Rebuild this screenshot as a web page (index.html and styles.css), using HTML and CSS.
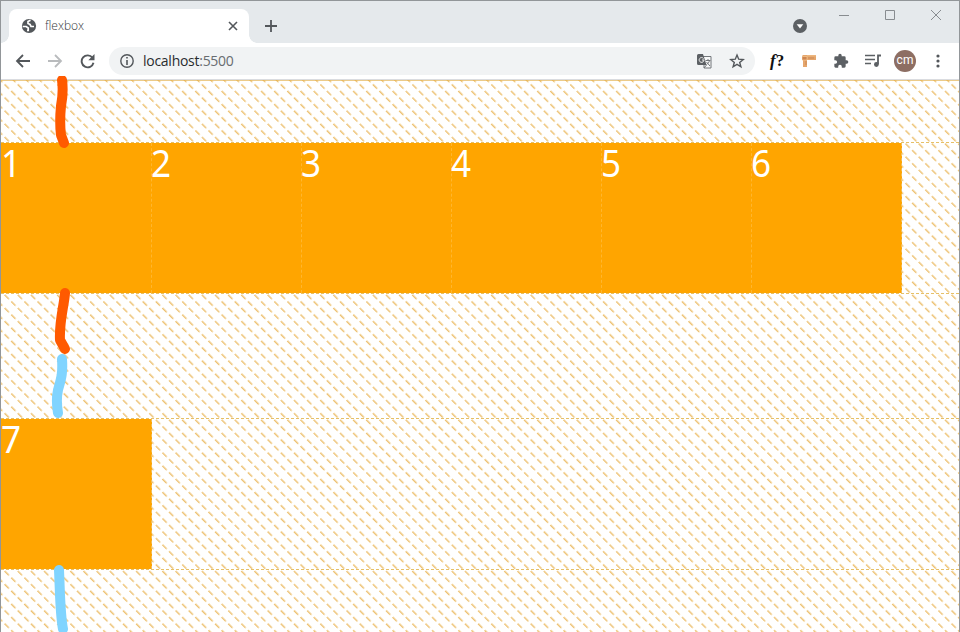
FILE: index.html
```
<!DOCTYPE html>
<html lang="en">
<head>
<meta charset="utf-8">
<title>flexbox</title>
<link rel="stylesheet" href="styles.css">
</head>
<body>
<div class="browser">
  <header class="tabs">
    <div class="tab">
      <svg class="globe" width="16" height="16" viewBox="0 0 16 16"><circle cx="8" cy="8" r="7.1" fill="#53575b"/><path d="M1.700 8.500h3.500l2 1.500v2.500H6M9.500 2.200L7 3.500v2l2 1 1 2h3" fill="none" stroke="#fff" stroke-width="1.7"/></svg>
      <span class="title">flexbox</span>
      <svg width="10" height="10" viewBox="0 0 10 10"><path d="M1 1l8 8M9 1L1 9" stroke="#53575b" stroke-width="1.6"/></svg>
    </div>
    <svg class="plus" width="14" height="14" viewBox="0 0 14 14"><path d="M7 1v12M1 7h12" stroke="#53575b" stroke-width="1.8"/></svg>
    <svg class="guest" width="14" height="14" viewBox="0 0 14 14"><circle cx="7" cy="7" r="7" fill="#5c6064"/><path d="M3.700 5.200h6.600L7 9.500z" fill="#fff"/></svg>
    <svg class="controls" width="104" height="12" viewBox="0 0 104 12"><path d="M1 6.500h10M47.500 1.500h9v9h-9zM93 1l10 10M103 1L93 11" fill="none" stroke="#888c90"/></svg>
  </header>
  <nav class="toolbar">
    <svg class="nav" width="82" height="16" viewBox="0 0 82 16"><path d="M15 8H2M8 2L2 8l6 6" fill="none" stroke="#53575b" stroke-width="1.8"/><path d="M33 8h13M40 2l6 6-6 6" fill="none" stroke="#b9bbbd" stroke-width="1.8"/><path d="M77.500 4.800A6 6 0 1 0 78.500 9.800" fill="none" stroke="#53575b" stroke-width="1.9"/><path d="M79.500 1v6.200h-6.200z" fill="#53575b"/></svg>
    <div class="address">
      <svg width="14" height="14" viewBox="0 0 14 14"><circle cx="7" cy="7" r="6.200" fill="none" stroke="#53575b" stroke-width="1.4"/><path d="M7 3v1.600M7 6v5" stroke="#53575b" stroke-width="1.600"/></svg>
      <span class="url">localhost<span class="port">:5500</span></span>
      <svg class="translate" width="15" height="15" viewBox="0 0 15 15"><path d="M5 2.500h9v11.500H7" fill="#f7f8f8" stroke="#73777b"/><path d="M0 1.500A1.500 1.500 0 0 1 1.500 0H6l3.500 11H1.500A1.500 1.500 0 0 1 0 9.500z" fill="#5c6064"/><path d="M6.500 4.500A2.400 2.400 0 1 0 7 6H5" fill="none" stroke="#eee"/><path d="M8.500 6.500h5M11 5v1.500M12.500 6.500c-.5 2-1.500 3-3 4M9.500 8l3.500 4M7 11v3l2.500-3" fill="none" stroke="#73777b"/></svg>
      <svg width="16" height="16" viewBox="0 0 16 16"><path d="M8 2l1.700 4.200 4.500.3-3.500 2.900 1.200 4.400L8 11.400l-3.900 2.400 1.200-4.400-3.500-2.900 4.500-.3z" fill="none" stroke="#53575b" stroke-width="1.4"/></svg>
    </div>
    <span class="font-ext"><i>f</i>?</span>
    <svg class="ruler" width="14" height="14" viewBox="0 0 14 14"><path d="M1 1h13v5H5v7H1V6H0V2z" fill="#e5a66d"/><path d="M0 2.500h5v3.500H0zM5 1.800h9" fill="#cf8550" stroke="#f5c891" stroke-width=".7"/><path d="M7 3v2M9 3v2M11 3v2M3 8h2M3 10h2" stroke="#b97545" stroke-width=".6"/></svg>
    <svg class="puzzle" width="16" height="16" viewBox="0 0 24 24"><path d="M20.500 11H19V7a2 2 0 0 0-2-2h-4V3.500a2.500 2.500 0 0 0-5 0V5H4a2 2 0 0 0-2 2v3.800h1.500a2.700 2.700 0 0 1 0 5.400H2V20c0 1.100.9 2 2 2h3.800v-1.500a2.700 2.700 0 0 1 5.400 0V22H17a2 2 0 0 0 2-2v-4h1.500a2.500 2.500 0 0 0 0-5z" fill="#5c6064"/></svg>
    <svg class="queue" width="17" height="14" viewBox="0 0 17 14"><path d="M0 1.500h10M0 5.500h10M0 9.500h6" stroke="#5c6064" stroke-width="1.600"/><path d="M13 10V1.500h3" fill="none" stroke="#5c6064" stroke-width="1.800"/><circle cx="11.400" cy="10.500" r="2.400" fill="#5c6064"/></svg>
    <span class="avatar">cm</span>
    <svg class="menu" width="4" height="14" viewBox="0 0 4 14"><g fill="#53575b"><circle cx="2" cy="2" r="1.600"/><circle cx="2" cy="7" r="1.600"/><circle cx="2" cy="12" r="1.600"/></g></svg>
  </nav>
  <main class="page">
    <svg class="hatch" width="958" height="553">
      <defs><pattern id="dashes" width="9.300" height="9.300" patternUnits="userSpaceOnUse" patternTransform="translate(7 1) rotate(-45)"><path d="M4.500 0v6" stroke="#e8ae45" stroke-width="1.100"/></pattern></defs>
      <rect width="958" height="553" fill="url(#dashes)"/>
    </svg>
    <section class="line">
      <div class="item"><span>1</span></div><div class="item"><span>2</span></div><div class="item"><span>3</span></div><div class="item"><span>4</span></div><div class="item"><span>5</span></div><div class="item"><span>6</span></div>
    </section>
    <section class="line">
      <div class="item"><span>7</span></div>
    </section>
    <svg class="marks" width="100" height="557" viewBox="0 75 100 557">
      <g fill="none" stroke-width="10" stroke-linecap="round" stroke-linejoin="round">
        <path d="M62 79C63 86 62.500 97 61 105C60 115 60 126 61 134L64 142M65 292C64 305 59 321 60 339L65 348" stroke="#ff5a00"/>
        <path d="M62 358C63 373 61 378 58 389C56 398 57 406 58 412M59 569C60 589 60 613 63 628" stroke="#80d4ff"/>
      </g>
    </svg>
  </main>
</div>
</body>
</html>
```
FILE: styles.css
```
* { box-sizing: border-box; }
body { margin: 0; overflow: hidden; font-family: "Open Sans", sans-serif; }
svg { display: block; flex: none; }
.browser { width: 960px; height: 632px; border: 1px solid #929699; border-bottom: 0; background: #fff; }
.tabs { height: 42px; display: flex; align-items: flex-start; background: #e5e9ec; }
.tab { position: relative; width: 240px; height: 34px; margin: 8px 0 0 8px; padding: 0 11px 0 12px; display: flex; align-items: center; border-radius: 8px 8px 0 0; background: #fff; }
.tab::before, .tab::after { content: ""; position: absolute; bottom: 0; width: 8px; height: 8px; }
.tab::before { left: -8px; background: radial-gradient(circle at 0 0, transparent 7.5px, #fff 8px); }
.tab::after { right: -8px; background: radial-gradient(circle at 100% 0, transparent 7.5px, #fff 8px); }
.title { margin-left: 8px; margin-right: auto; font-size: 12px; font-weight: 300; letter-spacing: 0; color: #34383c; line-height: 18px; }
.plus { margin: 18px auto 0 15px; }
.guest { margin: 18px 31px 0 0; }
.controls { margin: 8px 17px 0 0; }
.toolbar { height: 37px; display: flex; align-items: center; border-bottom: 1px solid #dadce0; }
.nav { margin-left: 14px; }
.address { width: 646px; height: 28px; margin-left: 12px; padding: 0 10px 0 11px; display: flex; align-items: center; border-radius: 14px; background: #f1f3f4; }
.url { margin: 0 auto 1px 9px; font-size: 14px; letter-spacing: -.27px; color: #292c2f; }
.port { color: #686c70; }
.translate { margin-right: 17px; }
.font-ext { width: 18px; margin-left: 15px; font: bold 17px/24px "Liberation Serif", serif; color: #111; white-space: nowrap; }
.ruler { margin-left: 14px; }
.puzzle { margin-left: 17px; }
.queue { margin-left: 16px; }
.avatar { width: 22px; height: 22px; margin-left: 12px; border-radius: 50%; background: #8d6e63; color: #fff; font: 12px/21px Roboto, sans-serif; text-align: center; }
.menu { margin-left: 20px; }
.page { position: relative; height: 553px; padding-top: 62px; box-shadow: inset 0 1px #eccb89; }
.hatch { position: absolute; left: 0; top: 0; }
.line { position: relative; height: 152px; display: flex; align-items: center; margin-bottom: 124px; border-top: 1px dashed #e6c067; border-bottom: 1px dashed #e6c067; }
.item { width: 150px; height: 150px; flex: none; background: #ffa500; color: #fff; font: 39px/38px "Noto Sans", sans-serif; }
.item span { display: inline-block; transform: scaleX(.9); transform-origin: 0 0; margin-left: -1px; }
.item + .item { border-left: 1px dashed #ffb62e; }
.item:first-child span { margin-left: 0; }
.item:last-child { border-right: 1px dashed #f2be5a; width: 151px; }
.marks { position: absolute; left: -1px; top: -4px; }
```
